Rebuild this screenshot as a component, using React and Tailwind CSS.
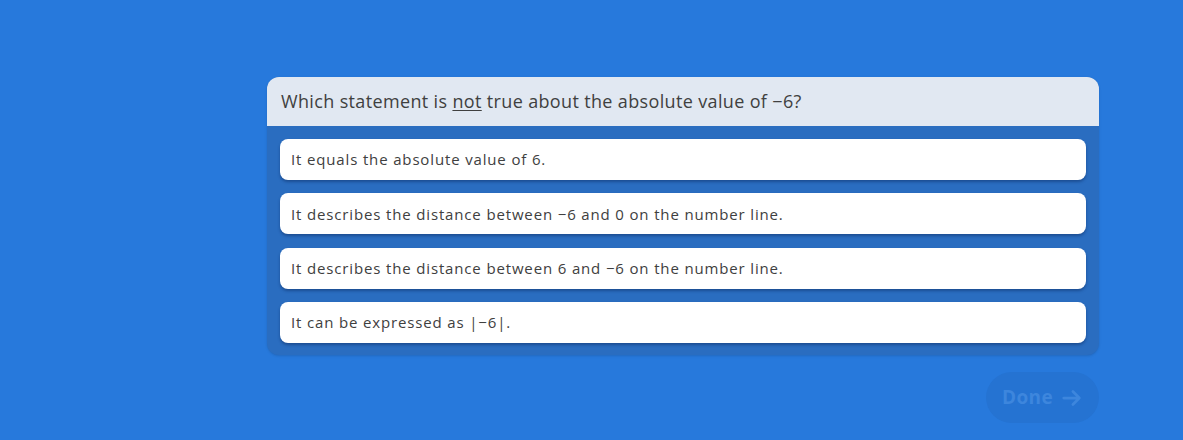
const options = [
  "It equals the absolute value of 6.",
  "It describes the distance between \u22126 and 0 on the number line.",
  "It describes the distance between 6 and \u22126 on the number line.",
  "It can be expressed as |\u22126|.",
];

export default function App() {
  return (
    <div
      className="w-[1183px] h-[440px] bg-[#2779dc] overflow-hidden"
      style={{ fontFamily: '"Open Sans", "Liberation Sans", sans-serif' }}
    >
      <div className="pt-[77px] pl-[267px] w-[1100px]">
        <div className="w-[832px] rounded-xl overflow-hidden bg-[#2a6dc0] shadow-sm">
          <div className="h-[49px] bg-[#e1e8f2] flex items-center px-[14px]">
            <p className="text-[18px] font-medium text-[#404040] tracking-[0.35px]">
              Which statement is <span className="underline underline-offset-2">not</span> true about the absolute value of −6?
            </p>
          </div>
          <div className="px-[13px] pt-[13px] pb-[12px] flex flex-col gap-[13.35px]">
            {options.map((o) => (
              <div
                key={o}
                className="h-[41px] bg-white rounded-lg flex items-center px-[11px] shadow-[0_2px_3px_rgba(10,40,90,0.45)]"
              >
                <span className="text-[15px] font-medium text-[#404040] tracking-[0.85px]">{o}</span>
              </div>
            ))}
          </div>
        </div>
        <div className="flex justify-end mt-[17px] w-[832px]">
          <button className="h-[51px] w-[113px] rounded-full bg-[#2573d2] flex items-center justify-center gap-2 text-[#3d86dd] font-bold text-[19px] tracking-[0.4px]">
            Done
            <svg width="22" height="22" viewBox="0 0 24 24" fill="none" stroke="currentColor" strokeWidth="3" strokeLinecap="round" strokeLinejoin="round">
              <path d="M3 12h17M13 5l7 7-7 7" />
            </svg>
          </button>
        </div>
      </div>
    </div>
  );
}
